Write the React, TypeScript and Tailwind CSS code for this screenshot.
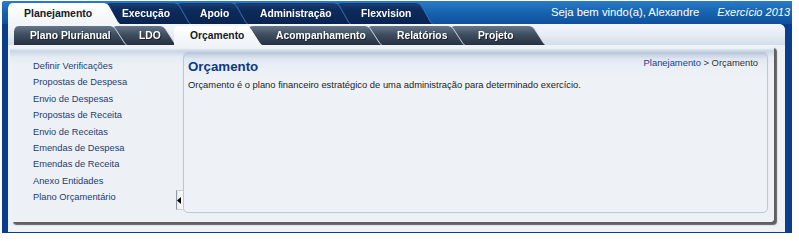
import React from "react";

const clip =
  "[clip-path:polygon(0_100%,0_5px,1px_2px,2.5px_0.6px,5px_0,calc(100%_-_16px)_0,calc(100%_-_13px)_1px,calc(100%_-_11px)_3px,calc(100%_-_2px)_calc(100%_-_2px),100%_100%)]";

type Tab = { label: string; wrap: string; pad: string; active?: boolean };

const row1: Tab[] = [
  { label: "Planejamento", wrap: "relative z-[10] w-[112px]", pad: "pl-[16px]", active: true },
  { label: "Execução", wrap: "relative z-[5] -ml-[14px] w-[84px]", pad: "pl-[16px]" },
  { label: "Apoio", wrap: "relative z-[4] -ml-[14px] w-[71px]", pad: "pl-[24px]" },
  { label: "Administração", wrap: "relative z-[3] -ml-[14px] w-[117px]", pad: "pl-[27px]" },
  { label: "Flexvision", wrap: "relative z-[2] -ml-[14px] w-[96px]", pad: "pl-[25px]" },
];

const row2: Tab[] = [
  { label: "Plano Plurianual", wrap: "relative z-[6] w-[112px]", pad: "pl-[16px]" },
  { label: "LDO", wrap: "relative z-[5] -ml-[14px] w-[64px]", pad: "pl-[27px]" },
  { label: "Orçamento", wrap: "relative z-[10] -ml-[2px] w-[88px]", pad: "pl-[16px]", active: true },
  { label: "Acompanhamento", wrap: "relative z-[3] -ml-[14px] w-[133px]", pad: "pl-[28px]" },
  { label: "Relatórios", wrap: "relative z-[2] -ml-[14px] w-[97px]", pad: "pl-[30px]" },
  { label: "Projeto", wrap: "relative z-[1] -ml-[14px] w-[95px]", pad: "pl-[28px]" },
];

const menu = [
  "Definir Verificações",
  "Propostas de Despesa",
  "Envio de Despesas",
  "Propostas de Receita",
  "Envio de Receitas",
  "Emendas de Despesa",
  "Emendas de Receita",
  "Anexo Entidades",
  "Plano Orçamentário",
];

export default function App() {
  return (
    <div className="w-[799px] h-[241px] bg-white font-['Liberation_Sans',Arial,sans-serif] overflow-hidden">
      <div className="ml-[2px] mt-[1px] w-[790px] h-[232px] bg-[#0b3d8f] rounded-tl-[3px] flex flex-col">
        {/* header */}
        <div className="h-[23px] flex items-end justify-between bg-[linear-gradient(to_bottom,#2a7bc6,#1663b0_50%,#0f509d)] rounded-tl-[3px]">
          <div className="flex items-end pl-[6px] h-[21px]">
            {row1.map((t) =>
              t.active ? (
                <div key={t.label} className={t.wrap}>
                  <div
                    className={`${clip} ${t.pad} h-[21px] flex items-center font-bold text-[10.5px] text-[#151b28] bg-[linear-gradient(to_bottom,#ffffff,#f1f5f9)]`}
                  >
                    {t.label}
                  </div>
                </div>
              ) : (
                <div key={t.label} className={`${t.wrap} [filter:drop-shadow(1px_0_0_#3b70b4)]`}>
                  <div
                    className={`${clip} ${t.pad} h-[21px] flex items-center font-bold text-[10.3px] text-white bg-[linear-gradient(to_bottom,#1a3f78,#0d2a5a_35%,#0a2451)]`}
                  >
                    {t.label}
                  </div>
                </div>
              )
            )}
          </div>
          <div className="flex items-center h-[23px] pr-[2px] text-white gap-[18px] pb-[1px]">
            <span className="text-[11.3px]">Seja bem vindo(a), Alexandre</span>
            <span className="text-[11px] italic">Exercício 2013</span>
          </div>
        </div>

        {/* body */}
        <div className="ml-[6px] w-[777px] h-[208px] bg-[#eef2f7] rounded-tr-[6px] flex flex-col">
          <div className="h-[21px] flex items-end pl-[6px] rounded-tr-[6px] bg-[linear-gradient(to_bottom,#f3f6fa,#e6edf4_50%,#d2deea)]">
            {row2.map((t) =>
              t.active ? (
                <div key={t.label} className={t.wrap}>
                  <div
                    className={`${clip} ${t.pad} h-[19px] flex items-center font-bold text-[10.3px] text-[#151b28] bg-[linear-gradient(to_bottom,#ffffff,#f0f4f8)]`}
                  >
                    {t.label}
                  </div>
                </div>
              ) : (
                <div key={t.label} className={`${t.wrap} [filter:drop-shadow(1px_0_0_#cdd8e4)]`}>
                  <div
                    className={`${clip} ${t.pad} h-[19px] flex items-center font-bold text-[10.3px] text-white [text-shadow:1px_1px_0_#1b2430] bg-[linear-gradient(to_bottom,#66778a,#3f4e5f_45%,#253140)]`}
                  >
                    {t.label}
                  </div>
                </div>
              )
            )}
          </div>

          {/* outer panel */}
          <div className="ml-[2px] mt-0 w-[764px] h-[177px] rounded-[4px] bg-[linear-gradient(to_bottom,#eff3f8_0px,#eff3f8_3px,#c9d6e5_6px,#e4ebf3_12px,#edf1f6_20px)] shadow-[3px_3px_1px_rgba(70,70,70,0.85)] flex">
            <div className="relative w-[173px] pl-[23px] pt-[13px] text-[9.3px] leading-[16.4px] text-[#233c73]">
              {menu.map((m) => (
                <div key={m}>{m}</div>
              ))}
              <div className="absolute top-[145px] right-0 w-[7px] h-[20px] bg-[linear-gradient(to_right,#e6e9ed,#ffffff)] border-l border-[#8d96a0] border-y border-y-[#c8cfd6] flex items-center">
                <svg width="4" height="7" viewBox="0 0 4 7">
                  <polygon points="4,0 0,3.5 4,7" fill="#000" />
                </svg>
              </div>
            </div>
            <div className="mt-[8px] mb-[9px] w-[585px] rounded-[5px] border border-[#bcc8d6] bg-[linear-gradient(to_bottom,#c2d0e1_0px,#dfe7f1_5px,#eaeff5_12px,#eef2f7_24px)] shadow-[0_-1px_1px_rgba(120,140,170,0.25)] px-[4px]">
              <div className="flex justify-between items-start">
                <div className="pt-[4px] text-[13.3px] font-bold text-[#0b3a82] leading-[18px]">Orçamento</div>
                <div className="pt-[3px] pr-[5px] text-[9.4px] leading-[12px]">
                  <span className="text-[#22418a]">Planejamento</span>
                  <span className="text-[#333]"> &gt; Orçamento</span>
                </div>
              </div>
              <div className="text-[9.4px] leading-[12px] text-[#1b1b1b] mt-[3px]">
                Orçamento é o plano financeiro estratégico de uma administração para determinado exercício.
              </div>
            </div>
          </div>
        </div>
      </div>
    </div>
  );
}
